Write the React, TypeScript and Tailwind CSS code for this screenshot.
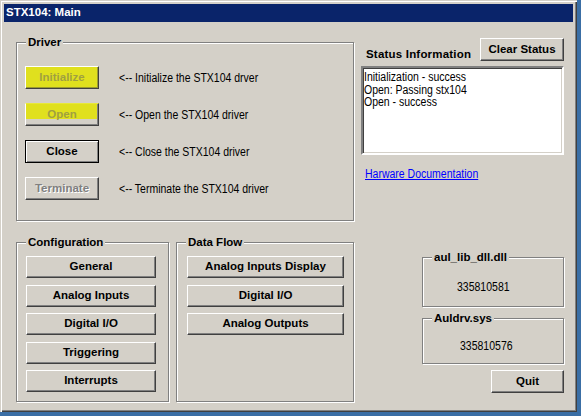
import React from "react";

const BTN =
  "flex items-center justify-center bg-[#d4d0c8] border border-t-white border-l-white border-r-[#404040] border-b-[#404040] shadow-[inset_-1px_-1px_0_#808080] font-bold text-[11.5px] leading-none text-black font-['Liberation_Sans',Arial,sans-serif]";

const NARROW =
  "inline-block whitespace-nowrap origin-left scale-x-[0.84] font-['Liberation_Sans',Arial,sans-serif] text-[12.5px] leading-[14px]";

function Group({
  label,
  className,
  children,
}: {
  label: string;
  className: string;
  children?: React.ReactNode;
}) {
  return (
    <div
      className={
        "relative border border-[#808080] shadow-[inset_1px_1px_0_#fff,1px_1px_0_#fff] " + className
      }
    >
      <span className="absolute -top-[8px] left-[9px] bg-[#d4d0c8] px-[2px] font-bold text-[11.5px] leading-[14px] text-black">
        {label}
      </span>
      {children}
    </div>
  );
}

export default function App() {
  const driverRows = [
    { label: "Initialize", text: "<-- Initialize the STX104 drver", kind: "hl1" },
    { label: "Open", text: "<-- Open the STX104 driver", kind: "hl2" },
    { label: "Close", text: "<-- Close the STX104 driver", kind: "def" },
    { label: "Terminate", text: "<-- Terminate the STX104 driver", kind: "dis" },
  ];
  const config = ["General", "Analog Inputs", "Digital I/O", "Triggering", "Interrupts"];
  const flow = ["Analog Inputs Display", "Digital I/O", "Analog Outputs"];

  return (
    <div className="w-[581px] h-[416px] bg-[#3a6ea5] overflow-hidden font-['Liberation_Sans',Arial,sans-serif]">
      <div className="w-[577px] h-[412px] bg-[#d4d0c8] p-[4px] shadow-[inset_1px_1px_0_#d4d0c8,inset_2px_2px_0_#fff,inset_-1px_-1px_0_#404040,inset_-2px_-2px_0_#808080] flex flex-col">
        <div className="h-[18px] shrink-0 bg-[#0a246a] text-white font-bold text-[11.5px] pl-[2px] flex items-center">
          STX104: Main
        </div>
        <div className="flex-1 flex pl-[12px]">
          {/* left column */}
          <div className="w-[338px] pt-[20px] flex flex-col">
            <Group label="Driver" className="h-[179px]">
              <div className="flex flex-col gap-[14px] pl-[8px] pt-[23px]">
                {driverRows.map((r) => {
                  let btn = BTN + " w-[74px] h-[23px]";
                  let txt = "";
                  if (r.kind === "hl1") {
                    btn =
                      "flex items-center justify-center w-[74px] h-[23px] border border-t-white border-l-white border-r-[#404040] border-b-[#404040] bg-[#e0e01e] shadow-[inset_-1px_-1px_0_#9a9a30] font-bold text-[11.5px] leading-none";
                    txt = "text-[#a0a040]";
                  } else if (r.kind === "hl2") {
                    btn =
                      "flex items-center justify-center w-[74px] h-[23px] border border-t-[#e8e83a] border-l-white border-r-[#404040] border-b-[#404040] bg-[linear-gradient(#e0e01e_0%,#e0e01e_70%,#d4d0c8_72%)] shadow-[inset_-1px_-1px_0_#808080] font-bold text-[11.5px] leading-none";
                    txt = "text-[#a0a040]";
                  } else if (r.kind === "def") {
                    btn =
                      "flex items-center justify-center w-[74px] h-[23px] border border-black bg-[#d4d0c8] shadow-[inset_1px_1px_0_#fff,inset_-1px_-1px_0_#808080] font-bold text-[11.5px] leading-none text-black";
                  } else {
                    txt = "text-[#808080] [text-shadow:1px_1px_0_#fff]";
                  }
                  return (
                    <div key={r.label} className="flex items-center h-[23px]">
                      <div className={btn}>
                        <span className={txt}>{r.label}</span>
                      </div>
                      <span className={"ml-[20px] text-black " + NARROW}>{r.text}</span>
                    </div>
                  );
                })}
              </div>
            </Group>
            <div className="mt-[21px] flex">
              <Group label="Configuration" className="w-[153px] h-[160px]">
                <div className="flex flex-col gap-[6.5px] pl-[9px] pt-[13px]">
                  {config.map((c) => (
                    <div key={c} className={BTN + " w-[130px] h-[22px]"}>
                      {c}
                    </div>
                  ))}
                </div>
              </Group>
              <Group label="Data Flow" className="ml-[7px] w-[178px] h-[160px]">
                <div className="flex flex-col gap-[6.5px] pl-[10px] pt-[13px]">
                  {flow.map((c) => (
                    <div key={c} className={BTN + " w-[157px] h-[22px]"}>
                      {c}
                    </div>
                  ))}
                </div>
              </Group>
            </div>
          </div>

          {/* right column */}
          <div className="w-[203px] ml-[7px] pt-[16px] flex flex-col">
            <div className="h-[23px] flex items-end justify-between">
              <span className="pl-[5px] font-bold text-[11.5px] leading-[14px] text-black tracking-[0.2px]">
                Status Information
              </span>
              <div className={BTN + " w-[84px] h-[23px]"}>Clear Status</div>
            </div>
            <div className="mt-[5px] h-[89px] flex flex-col items-start bg-white border-2 border-t-[#808080] border-l-[#808080] border-r-white border-b-white shadow-[inset_1px_1px_0_#404040,inset_-1px_-1px_0_#d4d0c8] pl-[1px] pt-[3px] text-black">
              <span className={NARROW + " !leading-[12.7px]"}>Initialization - success</span>
              <span className={NARROW + " !leading-[12.7px]"}>Open: Passing stx104</span>
              <span className={NARROW + " !leading-[12.7px]"}>Open - success</span>
            </div>
            <div className="mt-[12px] pl-[4px] h-[14px] flex">
              <span className={"text-[#0000ff] underline " + NARROW}>Harware Documentation</span>
            </div>
            <Group label="aul_lib_dll.dll" className="mt-[76px] ml-[61px] w-[142px] h-[50px]">
              <div className="flex pl-[34px] pt-[22px] text-black">
                <span className={NARROW}>335810581</span>
              </div>
            </Group>
            <Group label="Auldrv.sys" className="mt-[11px] ml-[61px] w-[142px] h-[46px]">
              <div className="flex pl-[37px] pt-[20px] text-black">
                <span className={NARROW}>335810576</span>
              </div>
            </Group>
            <div className="mt-[6px] flex justify-end">
              <div className={BTN + " w-[73px] h-[23px]"}>Quit</div>
            </div>
          </div>
        </div>
      </div>
    </div>
  );
}
